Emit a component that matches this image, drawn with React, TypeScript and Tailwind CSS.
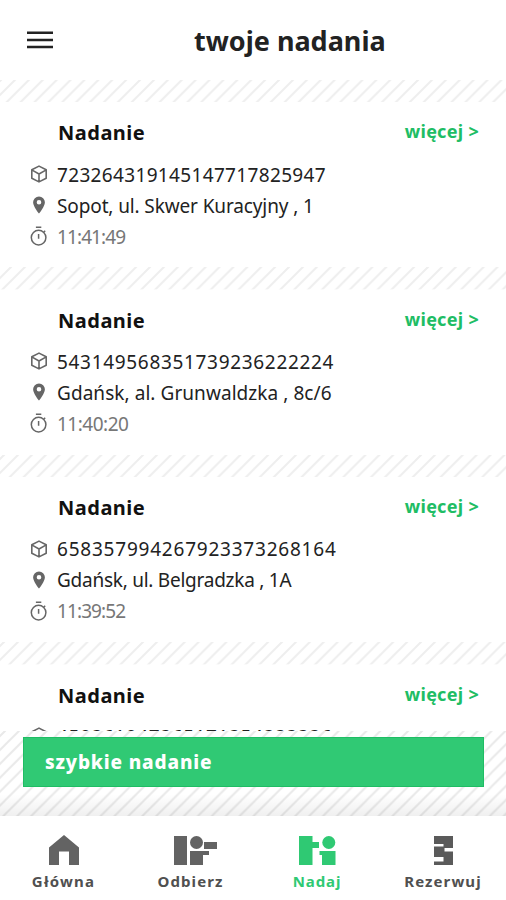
import clsx from "clsx";

interface Shipment {
  code: string;
  codeClass: string;
  address?: string;
  addressClass?: string;
  time?: string;
  timeClass?: string;
  stripeShift: number;
}

const shipments: Shipment[] = [
  {
    code: "723264319145147717825947",
    codeClass: "tracking-[0.34px]",
    address: "Sopot, ul. Skwer Kuracyjny , 1",
    addressClass: "tracking-[-0.12px]",
    time: "11:41:49",
    timeClass: "tracking-[-0.9px]",
    stripeShift: 1,
  },
  {
    code: "543149568351739236222224",
    codeClass: "tracking-[0.68px]",
    address: "Gdańsk, al. Grunwaldzka , 8c/6",
    addressClass: "tracking-[0.06px]",
    time: "11:40:20",
    timeClass: "tracking-[-0.5px]",
    stripeShift: 11,
  },
  {
    code: "658357994267923373268164",
    codeClass: "tracking-[0.78px]",
    address: "Gdańsk, ul. Belgradzka , 1A",
    addressClass: "tracking-[-0.25px]",
    time: "11:39:52",
    timeClass: "tracking-[-0.9px]",
    stripeShift: 4,
  },
  {
    code: "450361047365171354333336",
    codeClass: "tracking-[0.6px]",
    stripeShift: 4,
  },
];

interface StripesProps {
  id: string;
  className: string;
  color: string;
  shift: number;
}

function Stripes({ id, className, color, shift }: StripesProps) {
  return (
    <svg className={className} aria-hidden="true">
      <defs>
        <pattern id={id} width="13.9" height="13.9" patternUnits="userSpaceOnUse" patternTransform={`translate(${shift} 0)`}>
          <path d="M-2 15.9 15.9 -2M-2 2 2 -2M11.9 15.9 15.9 11.9" stroke={color} strokeWidth="2" />
        </pattern>
      </defs>
      <rect width="100%" height="100%" fill={`url(#${id})`} />
    </svg>
  );
}

function BoxIcon() {
  return (
    <svg className="-mt-[2px]" width="18" height="18" viewBox="0 0 18 18" fill="none" stroke="#666" strokeWidth="1.6" strokeLinejoin="round">
      <path d="M9 1.1 16.2 4.8v8.4L9 16.9 1.8 13.2V4.8zM2.600 5.400 9 9l6.400-3.600M9 9v7" />
    </svg>
  );
}

function PinIcon() {
  return (
    <svg className="-mt-[2px]" width="18" height="18" viewBox="0 0 18 18" fill="#666">
      <path fillRule="evenodd" d="M9 .4a5.9 5.9 0 0 0-5.9 5.9C3.1 10.7 9 17.6 9 17.6s5.9-6.9 5.9-11.300A5.9 5.9 0 0 0 9 .4m0 3.5a2.3 2.3 0 1 1 0 4.600 2.3 2.3 0 0 1 0-4.600" />
    </svg>
  );
}

function TimerIcon() {
  return (
    <svg className="-mt-[2px]" width="18" height="20" viewBox="0 0 18 20" fill="none" stroke="#666" strokeWidth="1.5">
      <circle cx="8.6" cy="11.6" r="7.3" />
      <path d="M5.9 1.2h5.4M8.6 8v4.8M13.7 6.2l1.5-1.5" />
    </svg>
  );
}

function ShipmentCard({ shipment }: { shipment: Shipment }) {
  return (
    <article className={clsx("bg-white", shipment.address ? "h-[165px]" : "h-[67px]")}>
      <div className="flex h-[57px] items-start justify-between pt-[17px] pr-[27px] pl-[58px]">
        <h2 className="text-[20px] leading-7 font-bold tracking-[0.5px] text-[#111]">Nadanie</h2>
        <a className="text-[18px] leading-6 font-bold tracking-[0.3px] text-[#20bd64]">więcej &gt;</a>
      </div>
      <div className="flex flex-col pl-[30px]">
        <div className="flex h-[31px] items-center gap-[9px]">
          <BoxIcon />
          <span className={clsx("text-[19px] whitespace-nowrap text-[#222]", shipment.codeClass)}>{shipment.code}</span>
        </div>
        {shipment.address && (
          <div className="flex h-[31px] items-center gap-[9px]">
            <PinIcon />
            <span className={clsx("text-[19px] whitespace-nowrap text-[#222]", shipment.addressClass)}>{shipment.address}</span>
          </div>
        )}
        {shipment.time && (
          <div className="flex h-[31px] items-center gap-[9px]">
            <TimerIcon />
            <span className={clsx("text-[19px] whitespace-nowrap text-[#777]", shipment.timeClass)}>{shipment.time}</span>
          </div>
        )}
      </div>
    </article>
  );
}

const tabs = [
  {
    label: "Główna",
    width: "w-[127px]",
    tracking: "tracking-[1.2px]",
    icon: (
      <svg width="32" height="31" viewBox="0 0 32 31" fill="#636363">
        <path d="M16 0 31 12.5V30H21V16.5H11V30H1V12.5z" />
      </svg>
    ),
  },
  {
    label: "Odbierz",
    width: "w-[127px]",
    tracking: "tracking-[1.1px]",
    icon: (
      <svg className="ml-[10px]" width="44" height="31" viewBox="0 0 44 31" fill="#636363">
        <path d="M0 1h13v29H0zM16 16h19v4h-6v10H16zM30 7h13v7H30z" />
        <circle cx="22.5" cy="7.5" r="6.5" />
      </svg>
    ),
  },
  {
    label: "Nadaj",
    width: "w-[126px]",
    tracking: "tracking-[0.9px]",
    active: true,
    icon: (
      <svg width="37" height="31" viewBox="0 0 37 31" fill="#2fc973">
        <path d="M0 1h13.5v6H20v6h-6.5v17H0zM20.5 16H36.5v14H23V20h-2.5z" />
        <circle cx="29.8" cy="7.5" r="6.5" />
      </svg>
    ),
  },
  {
    label: "Rezerwuj",
    width: "w-[126px]",
    tracking: "tracking-[1.1px]",
    icon: (
      <svg width="19" height="31" viewBox="0 0 19 31" fill="#5a5a5a">
        <path d="M0 1h19v12h-8.5v3.5H19V30H0v-3.5h9.5V22H0V11.5h9.5V9H0z" />
      </svg>
    ),
  },
];

export default function App() {
  return (
    <div className="flex h-[900px] w-[506px] flex-col overflow-hidden bg-white font-['Noto_Sans',sans-serif]">
      <header className="flex h-[80px] shrink-0 items-center pl-[27px]">
        <svg width="26" height="20" viewBox="0 0 26 20" stroke="#222" strokeWidth="2.5">
          <path d="M0 2.8h26M0 9.9h26M0 17h26" />
        </svg>
        <h1 className="mt-[2px] ml-[141px] text-[27px] leading-9 font-bold whitespace-nowrap text-[#222]">twoje nadania</h1>
      </header>
      <main className="flex h-[651px] shrink-0 flex-col overflow-hidden">
        {shipments.map((shipment, i) => (
          <div key={shipment.code} className="shrink-0">
            <Stripes id={`stripes-${i}`} className="block h-[22.4px] w-full" color="#eeeeee" shift={shipment.stripeShift} />
            <ShipmentCard shipment={shipment} />
          </div>
        ))}
      </main>
      <section className="relative h-[85px] shrink-0 pt-[6px] pr-[22px] pl-[23px]">
        <Stripes id="stripes-footer" className="absolute inset-0 h-full w-full" color="#e9e9e9" shift={5} />
        <div className="absolute inset-x-0 bottom-0 h-[22px] bg-linear-to-b from-transparent to-black/6" />
        <button className="relative flex h-[50px] w-full items-center bg-[#30c974] pb-px pl-[22px] pt-[2px] text-[19px] font-extrabold tracking-[0.85px] text-white ring-1 ring-[#1fbd64] ring-inset">
          szybkie nadanie
        </button>
      </section>
      <nav className="flex h-[84px] shrink-0 bg-white">
        {tabs.map((tab) => (
          <a key={tab.label} className={clsx("flex flex-col items-center pt-[19px]", tab.width, tab.active ? "text-[#2fc973]" : "text-[#505050]")}>
            {tab.icon}
            <span className={clsx("mt-[5px] text-[15px] leading-5 font-bold", tab.tracking)}>{tab.label}</span>
          </a>
        ))}
      </nav>
    </div>
  );
}
